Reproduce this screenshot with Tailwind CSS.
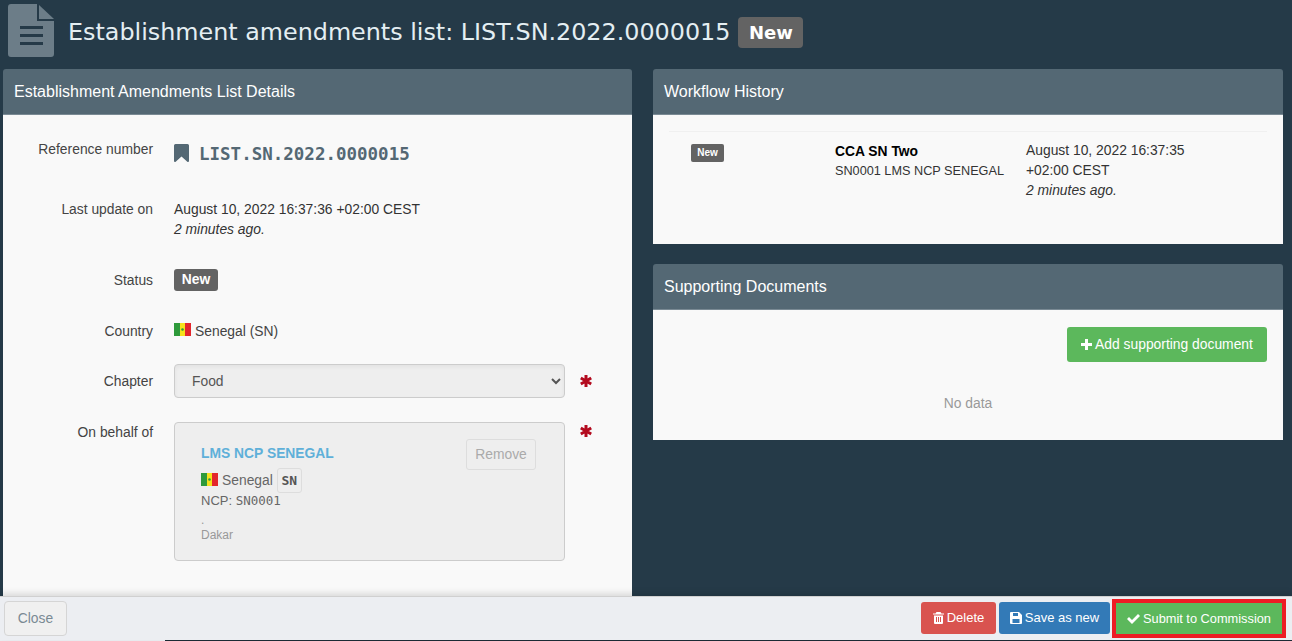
<!DOCTYPE html>
<html lang="en">
<head>
    <meta charset="UTF-8">
    <meta name="viewport" content="width=device-width, initial-scale=1.0">
    <title>Establishment amendments list</title>
    <script src="https://cdn.jsdelivr.net/npm/@tailwindcss/browser@4"></script>
</head>
<body class="bg-[#253a48] text-[#333] font-['Liberation_Sans',sans-serif] text-[13.85px] overflow-hidden">
<div class="h-[641px] flex flex-col overflow-hidden">

    <!-- Title -->
    <header class="h-[69px] shrink-0 flex items-start pl-[8px]">
        <svg class="w-[46px] h-[53px] mt-[4px] shrink-0" viewBox="0 0 46 53" fill="#6c7d88">
            <path d="M3 0H29V17H46V50a3 3 0 0 1-3 3H3a3 3 0 0 1-3-3V3a3 3 0 0 1 3-3Z"/>
            <path d="M31 1L46 15H31Z"/>
            <rect x="12" y="22" width="23" height="3" fill="#253a48"/>
            <rect x="12" y="30" width="23" height="3" fill="#253a48"/>
            <rect x="12" y="38" width="23" height="3" fill="#253a48"/>
        </svg>
        <h1 class="ml-[14px] mt-[15px] text-[23.83px] leading-[34px] text-[#e4eef2] font-['DejaVu_Sans',sans-serif] whitespace-nowrap">Establishment amendments list: LIST.SN.2022.0000015</h1>
        <span class="ml-[8px] mt-[17px] h-[31px] w-[65px] text-center rounded-[4px] bg-[#636363] text-white font-['DejaVu_Sans',sans-serif] font-bold text-[18px] leading-[31px]">New</span>
    </header>

    <!-- Panels -->
    <main class="flex-1 min-h-0 flex items-start pl-[3px] gap-[21px]">
        <section class="w-[629px] h-full flex flex-col rounded-t-[3px] overflow-hidden">
            <h2 class="h-[46px] shrink-0 bg-[#546874] text-white text-[16px] leading-[45px] pl-[11px] border-b border-[#7a8a94]">Establishment Amendments List Details</h2>
            <div class="flex-1 bg-[#f9f9f9] pt-[24px]">
                <div class="flex h-[50px]">
                    <div class="w-[150px] text-right leading-[20px] text-[#444]">Reference number</div>
                    <div class="ml-[21px] flex items-start">
                        <svg class="w-[15px] h-[18px] mt-[5px]" viewBox="0 0 15 18" fill="#546874"><path d="M1.500 0h12A1.500 1.500 0 0 1 15 1.500V17a1 1 0 0 1-1.700.7L7.500 12.500 1.700 17.700A1 1 0 0 1 0 17V1.500A1.500 1.500 0 0 1 1.500 0Z"/></svg>
                        <span class="ml-[10px] font-['DejaVu_Sans_Mono',monospace] font-bold text-[17.5px] leading-[30px] text-[#546874]">LIST.SN.2022.0000015</span>
                    </div>
                </div>
                <div class="flex h-[70px] mt-[10px]">
                    <div class="w-[150px] text-right leading-[20px] text-[#444]">Last update on</div>
                    <div class="ml-[21px] leading-[20px]">August 10, 2022 16:37:36 +02:00 CEST<br><em>2 minutes ago.</em></div>
                </div>
                <div class="flex h-[51px]">
                    <div class="w-[150px] text-right leading-[20px] text-[#444] pt-[1px]">Status</div>
                    <div class="ml-[21px]"><span class="block h-[22px] w-[44px] text-center rounded-[3px] bg-[#636363] text-white font-bold leading-[21px]">New</span></div>
                </div>
                <div class="flex h-[44px]">
                    <div class="w-[150px] text-right leading-[20px] text-[#444] pt-[1px]">Country</div>
                    <div class="ml-[21px] flex items-start">
                        <svg class="w-[17px] h-[13px] mt-[3px]" viewBox="0 0 17 13"><rect width="6" height="13" fill="#2e9a3b"/><rect x="6" width="5" height="13" fill="#f6e21c"/><rect x="11" width="6" height="13" fill="#e3262c"/><circle cx="8.500" cy="6.500" r="1.300" fill="#2e9a3b"/></svg>
                        <span class="ml-[4px] leading-[20px] pt-[1px] text-[#444]">Senegal (SN)</span>
                    </div>
                </div>
                <div class="flex h-[58px]">
                    <div class="w-[150px] text-right leading-[20px] text-[#444] pt-[7px]">Chapter</div>
                    <div class="ml-[21px] flex items-start">
                        <select disabled class="w-[391px] h-[34px] pl-[13px] pr-[6px] rounded-[4px] border border-[#ccc] bg-[#eee] text-[#555] shadow-inner opacity-100">
                            <option>Food</option>
                        </select>
                        <svg class="w-[12px] h-[12px] ml-[15px] mt-[11px]" viewBox="0 0 12 12" stroke="#b30a1e" stroke-width="3"><path d="M6 0V12M.8 3 11.200 9M.8 9 11.200 3"/></svg>
                    </div>
                </div>
                <div class="flex">
                    <div class="w-[150px] text-right leading-[20px] text-[#444]">On behalf of</div>
                    <div class="ml-[21px] flex items-start">
                        <div class="w-[391px] h-[139px] rounded-[4px] border border-[#ccc] bg-[#eee] pt-[15px] pl-[26px] pr-[28px] flex justify-between">
                            <div>
                                <div class="text-[#5fb0d9] font-bold leading-[30px] h-[30px]">LMS NCP SENEGAL</div>
                                <div class="flex items-center h-[25px] text-[#666]">
                                    <svg class="w-[17px] h-[13px] mb-[2px]" viewBox="0 0 17 13"><rect width="6" height="13" fill="#2e9a3b"/><rect x="6" width="5" height="13" fill="#f6e21c"/><rect x="11" width="6" height="13" fill="#e3262c"/><circle cx="8.500" cy="6.500" r="1.300" fill="#2e9a3b"/></svg>
                                    <span class="ml-[4px]">Senegal</span>
                                    <span class="ml-[4px] w-[25px] h-[25px] rounded-[3px] border border-[#ddd] text-center font-['DejaVu_Sans_Mono',monospace] font-bold text-[13px] leading-[23px] text-[#555]">SN</span>
                                </div>
                                <div class="leading-[20px] h-[20px] text-[13px] text-[#666] -mt-[2px]">NCP: <span class="font-['DejaVu_Sans_Mono',monospace] text-[12.500px]">SN0001</span></div>
                                <div class="text-[12px] leading-[14px] text-[#999] mt-[2px]">.</div>
                                <div class="text-[12px] leading-[14px] text-[#999] mt-[1px]">Dakar</div>
                            </div>
                            <span class="w-[70px] h-[31px] mt-[1px] rounded-[3px] border border-[#ddd] text-[#aaa] text-center leading-[29px]">Remove</span>
                        </div>
                        <svg class="w-[12px] h-[12px] ml-[15px] mt-[3px]" viewBox="0 0 12 12" stroke="#b30a1e" stroke-width="3"><path d="M6 0V12M.8 3 11.200 9M.8 9 11.200 3"/></svg>
                    </div>
                </div>
            </div>
        </section>

        <div class="w-[630px] flex flex-col gap-[20px]">
            <section class="rounded-t-[3px] overflow-hidden">
                <h2 class="h-[46px] bg-[#546874] text-white text-[16px] leading-[45px] pl-[11px] border-b border-[#7a8a94]">Workflow History</h2>
                <div class="h-[129px] bg-[#f9f9f9] px-[16px] pt-[16px]">
                    <div class="border-t border-[#f0f0f0] pt-[9px] flex text-[#333]">
                        <div class="w-[166px] pl-[22px]"><span class="block w-[33px] h-[18px] rounded-[2px] bg-[#636363] text-white font-bold text-[10px] leading-[17px] text-center mt-[3px]">New</span></div>
                        <div class="w-[191px]">
                            <div class="font-bold text-black leading-[20px]">CCA SN Two</div>
                            <div class="text-[12.700px] leading-[20px]">SN0001 LMS NCP SENEGAL</div>
                        </div>
                        <div class="leading-[20px] w-[200px] -mt-[1px]">August 10, 2022 16:37:35<br>+02:00 CEST<br><em>2 minutes ago.</em></div>
                    </div>
                </div>
            </section>
            <section class="rounded-t-[3px] overflow-hidden">
                <h2 class="h-[46px] bg-[#546874] text-white text-[16px] leading-[45px] pl-[11px] border-b border-[#7a8a94]">Supporting Documents</h2>
                <div class="h-[130px] bg-[#f9f9f9] pt-[17px] px-[16px]">
                    <div class="flex justify-end">
                        <span class="h-[35px] w-[200px] rounded-[3px] bg-[#5cb85c] text-white flex items-center justify-center">
                            <svg class="w-[11px] h-[11px] mr-[3px]" viewBox="0 0 11 11" fill="#fff"><path d="M4 0h3v4h4v3H7v4H4V7H0V4h4Z"/></svg>Add supporting document
                        </span>
                    </div>
                    <div class="text-center text-[#999] mt-[31px] leading-[20px]">No data</div>
                </div>
            </section>
        </div>
    </main>

    <!-- Action bar -->
    <footer class="relative h-[44px] shrink-0 bg-[#eceef2] border-t border-[#d0d0d0] shadow-[0_-3px_6px_rgba(0,0,0,0.12)] flex items-center justify-between pl-[4px] pr-[6px]">
        <span class="w-[63px] h-[35px] rounded-[4px] border border-[#d5d5d5] bg-[#f0f0f0] text-[#7a8a94] text-center leading-[33px]">Close</span>
        <div class="flex items-start">
            <span class="mt-[3px] h-[32px] w-[75px] rounded-[3px] bg-[#d9534f] text-white text-[13px] flex items-center justify-center">
                <svg class="w-[11px] h-[12px] mr-[3px]" viewBox="0 0 11 12" fill="#fff"><path d="M3.500 0h4l1 1.500H11v1H0v-1h2.500ZM1 3.500h9V11a1 1 0 0 1-1 1H2a1 1 0 0 1-1-1Zm2 1.500v5h1V5Zm2 0v5h1V5Zm2 0v5h1V5Z"/></svg>Delete
            </span>
            <span class="mt-[3px] ml-[3px] h-[32px] w-[111px] rounded-[3px] bg-[#337ab7] text-white text-[13px] flex items-center justify-center">
                <svg class="w-[12px] h-[12px] mr-[3px]" viewBox="0 0 12 12" fill="#fff"><path d="M1 0h8l3 3v8a1 1 0 0 1-1 1H1a1 1 0 0 1-1-1V1a1 1 0 0 1 1-1Zm2 1v3h5V1ZM2.500 7v4h7V7Z"/></svg>Save as new
            </span>
            <span class="ml-[2px] h-[39px] w-[174px] border-[4px] border-[#ed1c24] bg-[#5cb85c] text-white text-[12.800px] flex items-center justify-center">
                <svg class="w-[13px] h-[10px] mr-[3px]" viewBox="0 0 13 10" fill="#fff"><path d="M0 5l2-2 3 3 6-6 2 2-8 8Z"/></svg>Submit to Commission
            </span>
        </div>
    </footer>
    <div class="h-px shrink-0 bg-[#eceef2]"><div class="h-px ml-[165px] bg-[#1c2b35]"></div></div>
</div>
</body>
</html>
